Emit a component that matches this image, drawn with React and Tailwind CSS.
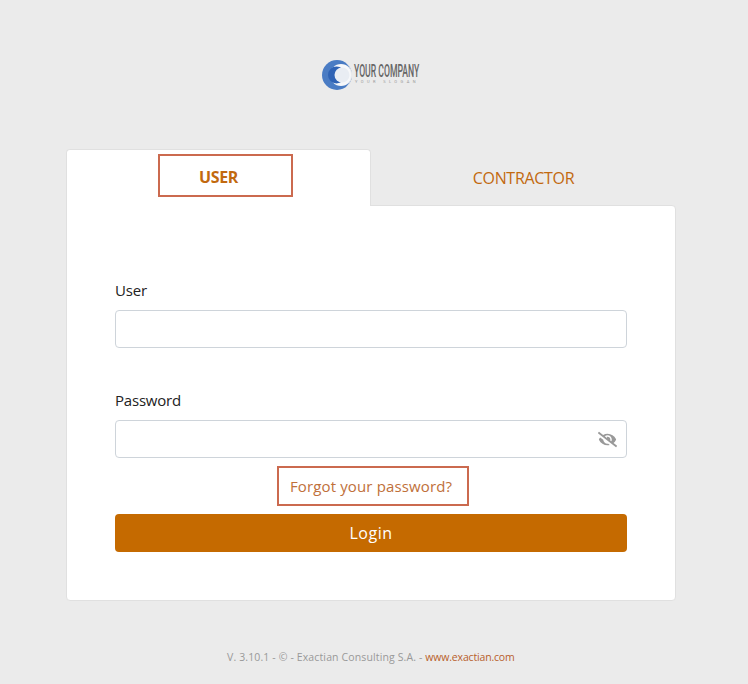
import React from "react";
import { FaEyeSlash } from "react-icons/fa";

function Logo() {
  return (
    <svg width="104" height="32" viewBox="0 0 104 32" className="block">
      <circle cx="15" cy="15" r="15" fill="#4a7cc4" />
      <circle cx="19" cy="15" r="11" fill="#f7f8fa" />
      <circle cx="14.5" cy="15" r="8.5" fill="#2f63b5" />
      <circle cx="20" cy="15" r="7.5" fill="#e9edf3" />
      <path d="M24 3 A15 15 0 0 1 24 27 A17 17 0 0 0 24 3 Z" fill="#ebebeb" />
      <text transform="translate(32 17) scale(0.48 1)" fontFamily="'Roboto', sans-serif" fontSize="18" fontWeight="500" fill="#666">YOUR COMPANY</text>
      <text x="33" y="23" fontFamily="'Roboto', sans-serif" fontSize="4" fill="#999" letterSpacing="3.4">YOUR SLOGAN</text>
    </svg>
  );
}

export default function App() {
  return (
    <div className="h-[684px] bg-[#ebebeb] overflow-hidden font-['Open_Sans',sans-serif]">
      <div className="flex justify-center pt-[60px]">
        <Logo />
      </div>
      <div className="w-[610px] ml-[66px] mt-[57px]">
        <div className="flex h-[57px]">
          <div className="w-[305px] h-[57px] bg-white border border-b-0 border-[#e0e0e0] rounded-t-[4px] pl-[91px] pt-[4px] relative z-10">
            <div className="w-[135px] h-[43px] border-2 border-[#cb6a4f] flex items-center justify-center pr-[14px] pt-[2px] text-[#c2690f] text-[16px] font-bold tracking-[-0.4px]">
              USER
            </div>
          </div>
          <div className="flex-1 flex items-center justify-center text-[#c2690f] text-[16px] tracking-[-0.3px]">
            CONTRACTOR
          </div>
        </div>
        <div className="-mt-[1px] h-[396px] bg-white border border-[#e0e0e0] rounded-b-[4px] rounded-tr-[4px] px-[48px] pt-[73px]">
          <label className="block text-[15px] leading-[22px] text-[#222] tracking-[-0.2px] h-[24px]">User</label>
          <div className="mt-[7px] h-[38px] border border-[#ced4da] rounded-[4px]" />
          <label className="block mt-[41px] text-[15px] leading-[22px] text-[#222] tracking-[-0.2px] h-[24px]">Password</label>
          <div className="mt-[7px] h-[38px] border border-[#ced4da] rounded-[4px] flex items-center justify-end pr-[9px]">
            <FaEyeSlash className="text-[#999] text-[19px]" />
          </div>
          <div className="flex justify-center mt-[8px]">
            <div className="w-[192px] h-[40px] ml-[4px] border-2 border-[#cb6a4f] flex items-center justify-center pr-[4px] text-[#c0703a] text-[15px] tracking-[0.14px]">
              Forgot your password?
            </div>
          </div>
          <div className="mt-[8px] h-[38px] bg-[#c56a00] rounded-[4px] flex items-center justify-center text-white text-[16px] font-medium tracking-[0.5px]">
            Login
          </div>
        </div>
      </div>
      <div className="mt-[49px] ml-[227px] text-[10.5px] leading-[14px] text-[#999] tracking-[0.13px]">
        V. 3.10.1 - © - Exactian Consulting S.A. - <span className="text-[#b8602c] tracking-[-0.17px]">www.exactian.com</span>
      </div>
    </div>
  );
}
